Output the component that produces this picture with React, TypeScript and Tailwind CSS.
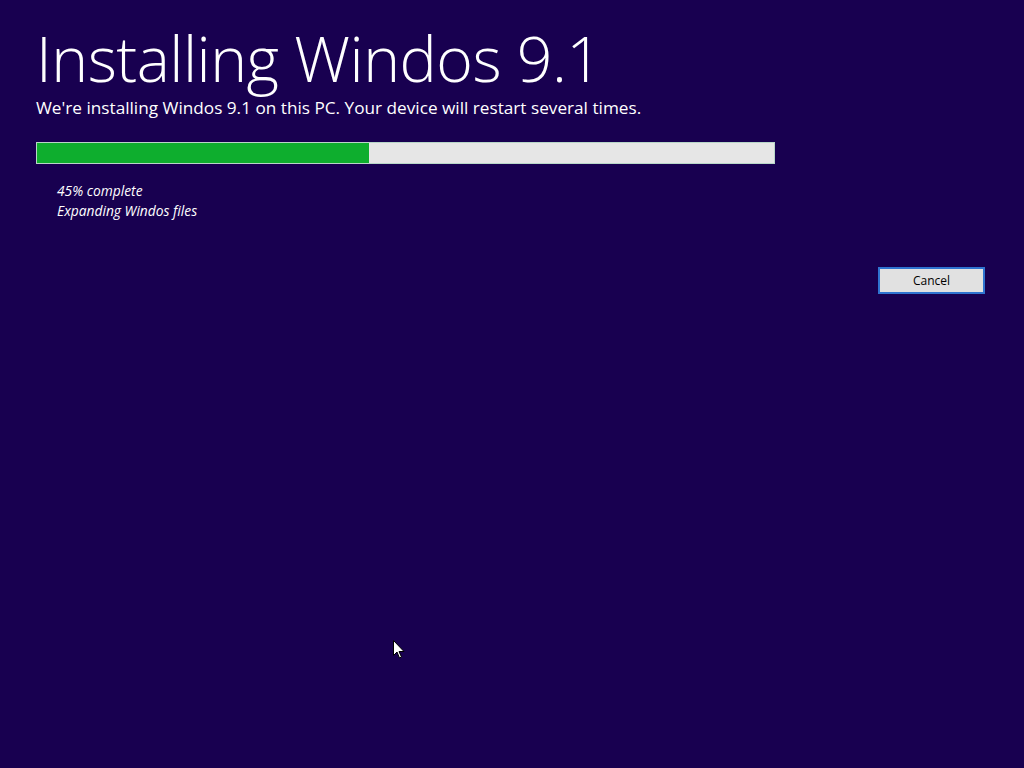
export default function App() {
  const progress = 45

  return (
    <div
      className="relative w-[1024px] h-[768px] bg-[#180050] text-white overflow-hidden"
      style={{ fontFamily: '"Open Sans", "Noto Sans", sans-serif' }}
    >
      <div className="pl-[36px] pt-[27px]">
        <h1 className="text-[62.5px] font-light leading-[62px] tracking-[-0.5px]">Installing Windos 9.1</h1>
        <p className="text-[17.2px] font-normal leading-[24px] mt-[7px]">
          We're installing Windos 9.1 on this PC. Your device will restart several times.
        </p>

        <div className="mt-[22px] w-[739px] h-[22px] bg-[#e6e6e6] border border-[#b8d6c8] flex">
          <div className="h-full bg-[#0eae2e]" style={{ width: `${progress}%` }} />
        </div>

        <div className="pl-[21px] mt-[17px] text-[13.8px] italic font-normal leading-[20px]">
          <div>{progress}% complete</div>
          <div>Expanding Windos files</div>
        </div>
      </div>

      <div className="flex justify-end pr-[39px] mt-[46px]">
        <button className="w-[107px] h-[27px] bg-[#e1e1e1] border-2 border-[#2f74d0] text-[12px] text-black">
          Cancel
        </button>
      </div>

      <svg className="absolute left-[393px] top-[640px]" width="12" height="19" viewBox="0 0 12 19">
        <path d="M0.5 0.5 L0.5 15.5 L4 12 L6.5 18 L8.5 17 L6 11.5 L11 11.5 Z" fill="#fff" stroke="#000" strokeWidth="1" />
      </svg>
    </div>
  )
}
